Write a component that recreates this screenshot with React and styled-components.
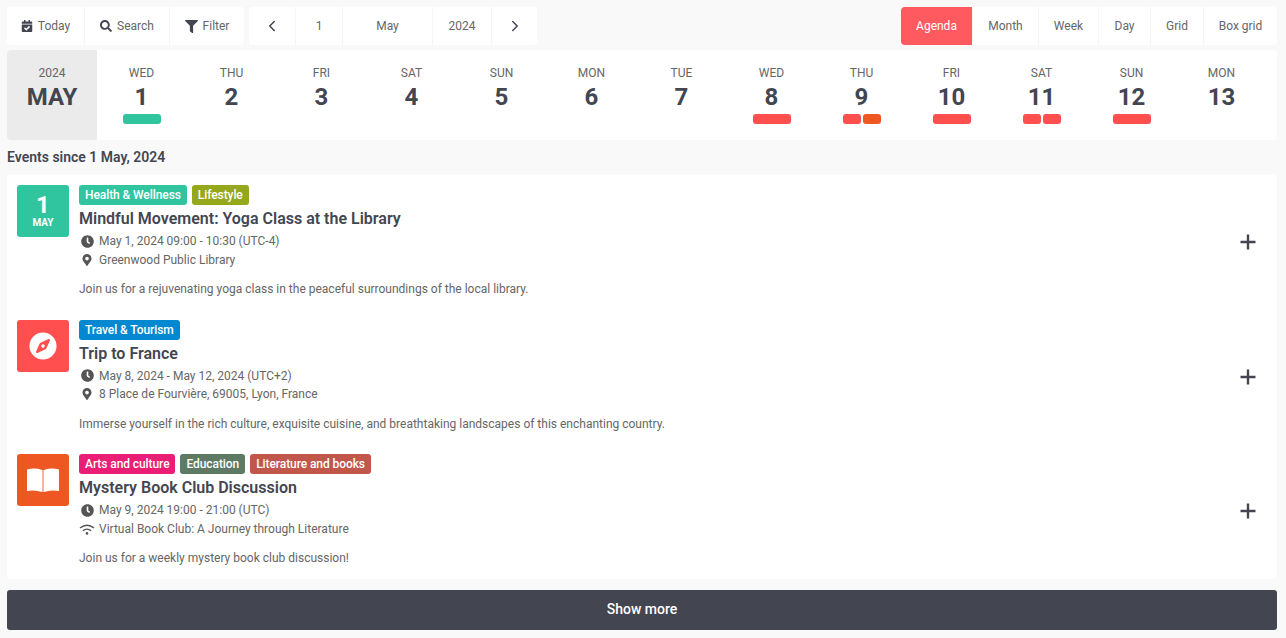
import React from 'react'
import styled, { createGlobalStyle } from 'styled-components'
import { FaCalendarCheck, FaSearch, FaFilter, FaClock, FaMapMarkerAlt, FaCompass } from 'react-icons/fa'
import { ChevronLeft, ChevronRight } from 'lucide-react'

const GlobalStyle = createGlobalStyle`
  html, body {
    margin: 0;
    padding: 0;
    background: #f9f9f9;
    font-family: Roboto, "Liberation Sans", sans-serif;
    color: #666;
  }
`

const Page = styled.div`
  padding: 7px 9px 8px 7px;
  height: 638px;
  box-sizing: border-box;
  overflow: hidden;
`

const Toolbar = styled.div`
  display: flex;
  height: 38px;
  gap: 5px;
`

const Group = styled.div`
  display: flex;
  background: #fff;
  border-radius: 4px;
  overflow: hidden;
  margin-left: ${props => (props.$right ? 'auto' : '0')};
`

const ToolButton = styled.div`
  width: ${props => props.$w}px;
  box-sizing: border-box;
  display: flex;
  align-items: center;
  justify-content: center;
  gap: 5px;
  font-size: 12px;
  color: ${props => (props.$active ? '#fff' : '#666')};
  background: ${props => (props.$active ? '#ff5a5f' : 'transparent')};
  border-right: 1px solid #f5f5f5;

  &:last-child {
    border-right: 0;
  }

  svg {
    color: #434651;
    flex: none;
  }
`

const Calendar = styled.div`
  display: flex;
  height: 90px;
  margin-top: 5px;
  background: #fff;
  border-radius: 4px;
  overflow: hidden;
`

const MonthCell = styled.div`
  width: 90px;
  flex: none;
  background: #ebebeb;
  text-align: center;
  padding-top: 16px;
  box-sizing: border-box;
`

const SmallLabel = styled.div`
  font-size: 12px;
  line-height: 15px;
  color: #666;
`

const BigLabel = styled.div`
  font-size: 24px;
  line-height: 32px;
  font-weight: 700;
  color: #434651;
`

const DayCell = styled.div`
  width: 90px;
  flex: none;
  text-align: center;
  padding-top: 16px;
  box-sizing: border-box;

  ${SmallLabel}, ${BigLabel} {
    padding-right: 1px;
  }
`

const Bars = styled.div`
  display: flex;
  justify-content: center;
  gap: 2px;
  margin-top: 1px;
`

const Bar = styled.div`
  width: ${props => props.$w}px;
  height: 10px;
  border-radius: 3px;
  background: ${props => props.$color};
`

const SinceTitle = styled.div`
  font-size: 14px;
  font-weight: 600;
  line-height: 35px;
  height: 35px;
  color: #434651;
`

const List = styled.div`
  background: #fff;
  border-radius: 4px;
  height: 404px;
`

const Row = styled.div`
  height: 134.67px;
  box-sizing: border-box;
  padding: 10px 0 0 10px;
  display: flex;
  position: relative;
`

const Tile = styled.div`
  width: 52px;
  height: 52px;
  flex: none;
  border-radius: 3px;
  background: ${props => props.$color};
  color: #fff;
  display: flex;
  flex-direction: column;
  align-items: center;
  justify-content: center;
  margin-right: 10px;
`

const TileDay = styled.div`
  font-size: 24px;
  line-height: 23px;
  font-weight: 700;
`

const TileMonth = styled.div`
  font-size: 10px;
  line-height: 12px;
  font-weight: 700;
`

const CompassDisc = styled.div`
  width: 28px;
  height: 28px;
  border-radius: 50%;
  color: #fff;
  display: flex;
`

const Content = styled.div`
  flex: 1;
`

const Tags = styled.div`
  display: flex;
  gap: 5px;
`

const Tag = styled.div`
  height: 20px;
  line-height: 20px;
  padding: 0 6px;
  border-radius: 3px;
  font-size: 12px;
  font-weight: 500;
  letter-spacing: -0.08px;
  color: #fff;
  background: ${props => props.$color};
`

const EventTitle = styled.div`
  font-size: 16px;
  font-weight: 600;
  line-height: 26px;
  margin-top: 1px;
  color: #434651;
`

const Meta = styled.div`
  display: flex;
  align-items: center;
  font-size: 12px;
  line-height: 18.5px;
  color: #666;
`

const MetaIcon = styled.span`
  width: 16px;
  margin-right: 4px;
  display: flex;
  justify-content: center;
  color: #555;
`

const Description = styled.div`
  font-size: 12px;
  line-height: 18px;
  margin-top: 11px;
  color: #666;
`

const PlusButton = styled.svg`
  position: absolute;
  right: 20px;
  top: 58px;
  width: 18px;
  height: 18px;
  color: #434651;
`

const ShowMore = styled.div`
  margin-top: 11px;
  height: 40px;
  line-height: 39px;
  background: #434651;
  border-radius: 3px;
  color: #fff;
  text-align: center;
  font-size: 14px;
  font-weight: 500;
`

const RED = '#ff4f4f'
const ORANGE = '#ef5722'

const BookIcon = () => (
  <svg width="34" height="26" viewBox="0 0 34 26" fill="currentColor">
    <path d="M1 2.5Q9 .5 16 3V25Q9 22.5 1 24Z" />
    <path d="M33 2.5Q25 .5 18 3V25Q25 22.5 33 24Z" />
    <rect x="16" y="3" width="2" height="22" opacity=".55" />
  </svg>
)

const WifiIcon = () => (
  <svg width="16" height="11" viewBox="0 0 16 11" fill="none" stroke="currentColor" strokeWidth="1.4">
    <path d="M1 4Q8 -1.5 15 4" />
    <path d="M3.8 6.8Q8 3.4 12.2 6.8" />
    <circle cx="8" cy="9.4" r="1.3" fill="currentColor" stroke="none" />
  </svg>
)

const days = [
  ['WED', 1, [[38, '#31c59f']]],
  ['THU', 2, []],
  ['FRI', 3, []],
  ['SAT', 4, []],
  ['SUN', 5, []],
  ['MON', 6, []],
  ['TUE', 7, []],
  ['WED', 8, [[38, RED]]],
  ['THU', 9, [[18, RED], [18, ORANGE]]],
  ['FRI', 10, [[38, RED]]],
  ['SAT', 11, [[18, RED], [18, RED]]],
  ['SUN', 12, [[38, RED]]],
  ['MON', 13, []]
]

const events = [
  {
    color: '#31c59f',
    tile: (
      <>
        <TileDay>1</TileDay>
        <TileMonth>MAY</TileMonth>
      </>
    ),
    tags: [['Health & Wellness', '#31c59f'], ['Lifestyle', '#95a81c']],
    title: 'Mindful Movement: Yoga Class at the Library',
    date: 'May 1, 2024 09:00 - 10:30 (UTC-4)',
    place: 'Greenwood Public Library',
    description: 'Join us for a rejuvenating yoga class in the peaceful surroundings of the local library.'
  },
  {
    color: RED,
    tile: (
      <CompassDisc>
        <FaCompass size={28} />
      </CompassDisc>
    ),
    tags: [['Travel & Tourism', '#0288d1']],
    title: 'Trip to France',
    date: 'May 8, 2024 - May 12, 2024 (UTC+2)',
    place: '8 Place de Fourvière, 69005, Lyon, France',
    description: 'Immerse yourself in the rich culture, exquisite cuisine, and breathtaking landscapes of this enchanting country.'
  },
  {
    color: ORANGE,
    tile: <BookIcon />,
    tags: [['Arts and culture', '#e91e74'], ['Education', '#5c7a64'], ['Literature and books', '#c0574a']],
    title: 'Mystery Book Club Discussion',
    date: 'May 9, 2024 19:00 - 21:00 (UTC)',
    place: 'Virtual Book Club: A Journey through Literature',
    online: true,
    description: 'Join us for a weekly mystery book club discussion!'
  }
]

export default function App() {
  return (
    <Page>
      <GlobalStyle />
      <Toolbar>
        <Group>
          <ToolButton $w={78}><FaCalendarCheck size={12} />Today</ToolButton>
          <ToolButton $w={85}><FaSearch size={12} />Search</ToolButton>
          <ToolButton $w={74}><FaFilter size={13} />Filter</ToolButton>
        </Group>
        <Group>
          <ToolButton $w={47}><ChevronLeft size={18} /></ToolButton>
          <ToolButton $w={47}>1</ToolButton>
          <ToolButton $w={90}>May</ToolButton>
          <ToolButton $w={59}>2024</ToolButton>
          <ToolButton $w={45}><ChevronRight size={18} /></ToolButton>
        </Group>
        <Group $right>
          <ToolButton $w={72} $active>Agenda</ToolButton>
          <ToolButton $w={66}>Month</ToolButton>
          <ToolButton $w={60}>Week</ToolButton>
          <ToolButton $w={52}>Day</ToolButton>
          <ToolButton $w={53}>Grid</ToolButton>
          <ToolButton $w={73}>Box grid</ToolButton>
        </Group>
      </Toolbar>

      <Calendar>
        <MonthCell>
          <SmallLabel>2024</SmallLabel>
          <BigLabel>MAY</BigLabel>
        </MonthCell>
        {days.map(([name, num, bars]) => (
          <DayCell key={num}>
            <SmallLabel>{name}</SmallLabel>
            <BigLabel>{num}</BigLabel>
            <Bars>
              {bars.map(([w, color], i) => <Bar key={i} $w={w} $color={color} />)}
            </Bars>
          </DayCell>
        ))}
      </Calendar>

      <SinceTitle>Events since 1 May, 2024</SinceTitle>

      <List>
        {events.map(ev => (
          <Row key={ev.title}>
            <Tile $color={ev.color}>{ev.tile}</Tile>
            <Content>
              <Tags>
                {ev.tags.map(([label, color]) => <Tag key={label} $color={color}>{label}</Tag>)}
              </Tags>
              <EventTitle>{ev.title}</EventTitle>
              <Meta><MetaIcon><FaClock size={13} /></MetaIcon>{ev.date}</Meta>
              <Meta>
                <MetaIcon>{ev.online ? <WifiIcon /> : <FaMapMarkerAlt size={12} />}</MetaIcon>
                {ev.place}
              </Meta>
              <Description>{ev.description}</Description>
            </Content>
            <PlusButton viewBox="0 0 18 18">
              <path d="M9 1.5v15M1.5 9h15" stroke="currentColor" strokeWidth="2.4" fill="none" />
            </PlusButton>
          </Row>
        ))}
      </List>

      <ShowMore>Show more</ShowMore>
    </Page>
  )
}
